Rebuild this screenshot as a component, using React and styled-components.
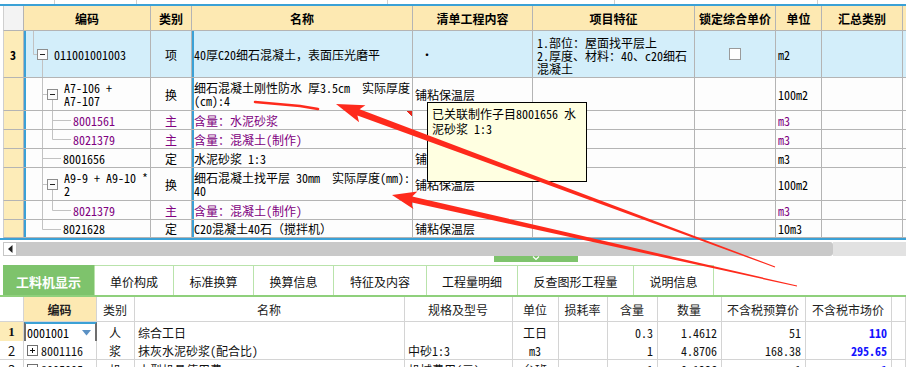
import React from 'react';
import styled, { createGlobalStyle } from 'styled-components';

const FONT = `"Noto Sans Mono CJK SC", "Noto Sans CJK SC", "Liberation Sans", sans-serif`;
const UI_FONT = `"Noto Sans CJK SC", "Liberation Sans", sans-serif`;

const GlobalStyle = createGlobalStyle`
  *, *::before, *::after { box-sizing: border-box; }
  html, body { margin: 0; padding: 0; background: #fff; }
  body { font-family: ${FONT}; }
`;

const BLUE = '#3ba1d6';
const GRID = '#b4b4b4';
const HEAD_BG = '#fde9b2';
const NUM_BG = '#fdecb8';
const SEL_BG = '#d3eefa';
const PURPLE = '#800080';

const Page = styled.div`
  position: relative;
  width: 906px;
  height: 367px;
  overflow: hidden;
  background: #fff;
  font-family: ${FONT};
  font-size: 12px;
  color: #000;
`;

/* ---------- top strip ---------- */
const TopStrip = styled.div`
  height: 4px;
  display: grid;
  grid-template-columns: 55px 82px 251px 227px 203px 1fr;
`;
const StripCell = styled.div`
  border-right: 1px solid #cfcfcf;
`;

/* ---------- top table ---------- */
const TopTable = styled.div`
  border-top: 2px solid ${BLUE};
  border-bottom: 2px solid ${BLUE};
`;
const topCols = '21px 127px 41px 221px 120px 162px 81px 46px 81px 1fr';
const TRow = styled.div`
  display: grid;
  grid-template-columns: ${topCols};
  padding-left: 3px;
  height: ${p => p.$h}px;
  line-height: 13px;
`;
const TCell = styled.div`
  position: relative;
  display: flex;
  align-items: center;
  justify-content: ${p => (p.$center ? 'center' : 'flex-start')};
  padding: 0 2px;
  border-right: 1px solid ${GRID};
  border-bottom: 1px solid ${GRID};
  background-color: ${p => p.$bg || '#fdfdfd'};
  color: ${p => (p.$purple ? PURPLE : '#000')};
  white-space: pre;
  overflow: hidden;
  ${p => (p.$blue ? `box-shadow: inset 2px 0 0 ${BLUE};` : '')}
  ${p =>
    p.$marked
      ? `background-image: linear-gradient(225deg, #e8261a 3.6px, transparent 3.6px);
         background-repeat: no-repeat; background-position: top right; background-size: 6px 6px;`
      : ''}
`;
const HeadCell = styled(TCell)`
  justify-content: center;
  font-weight: 700;
  background-color: ${HEAD_BG};
`;
const CornerCell = styled(TCell)`
  background-color: #f3f3f3;
  border-left: 1px solid #cfcfcf;
`;
const NumCell = styled(TCell)`
  background-color: ${NUM_BG};
  border-left: 1px solid #cfcfcf;
  font-weight: 700;
  padding-left: 6px;
`;
const CodeCell = styled(TCell)`
  padding: 0;
`;
const CodeText = styled.span`
  position: relative;
  padding-left: ${p => p.$indent}px;
`;
const FeatureText = styled.span`
  align-self: flex-start;
  padding-top: 5px;
  padding-left: 2px;
`;
const Check = styled.span`
  width: 12px;
  height: 12px;
  border: 1px solid #9a9a9a;
  background: #fff;
`;
const TreeSvg = styled.svg`
  position: absolute;
  left: 0;
  top: 0;
  pointer-events: none;
`;

function treeSpec(kind, h) {
  const L = [];
  let box = null;
  const cy = Math.floor(h / 2);
  switch (kind) {
    case 'root':
      L.push([9.5, 0, 9.5, 23.5], [9.5, 23.5, 13, 23.5], [18.5, 29, 18.5, h]);
      box = { x: 13, y: 18, t: 'minus' };
      break;
    case 'group':
      L.push([18.5, 0, 18.5, h], [18.5, cy + 0.5, 23, cy + 0.5], [28.5, cy + 6, 28.5, h]);
      box = { x: 23, y: cy - 5, t: 'minus' };
      break;
    case 'childMid':
      L.push([18.5, 0, 18.5, h], [28.5, 0, 28.5, h], [28.5, 9.5, 47, 9.5]);
      break;
    case 'childLast':
      L.push([18.5, 0, 18.5, h], [28.5, 0, 28.5, 9.5], [28.5, 9.5, 47, 9.5]);
      break;
    case 'leaf':
      L.push([18.5, 0, 18.5, h], [18.5, 9.5, 37, 9.5]);
      break;
    case 'leafLast':
      L.push([18.5, 0, 18.5, 9.5], [18.5, 9.5, 37, 9.5]);
      break;
    default:
  }
  return { L, box };
}

function Tree({ kind, h }) {
  const { L, box } = treeSpec(kind, h);
  return (
    <TreeSvg width="127" height={h}>
      {L.map((l, i) => (
        <line key={i} x1={l[0]} y1={l[1]} x2={l[2]} y2={l[3]} stroke="#c2c2c2" strokeWidth="1" />
      ))}
      {box && <ToggleBox x={box.x} y={box.y} t={box.t} />}
    </TreeSvg>
  );
}

function ToggleBox({ x, y, t }) {
  return (
    <g>
      <rect x={x + 0.5} y={y + 0.5} width="10" height="10" fill="#fbfbfb" stroke="#8e8e8e" />
      <line x1={x + 3} y1={y + 5.5} x2={x + 8} y2={y + 5.5} stroke="#222" />
      {t === 'plus' && <line x1={x + 5.5} y1={y + 3} x2={x + 5.5} y2={y + 8} stroke="#222" />}
    </g>
  );
}

const topRows = [
  { h: 47, sel: true, num: '3', tree: 'root', indent: 30, code: '011001001003', cat: '项', name: '40厚C20细石混凝土，表面压光磨平', content: ' ·', feature: '1.部位：屋面找平层上\n2.厚度、材料：40、c20细石\n混凝土', lock: true, unit: 'm2' },
  { h: 33, tree: 'group', indent: 40, code: 'A7-106 +\nA7-107', cat: '换', name: '细石混凝土刚性防水 厚3.5cm  实际厚度\n(cm):4', content: '铺粘保温层', unit: '100m2' },
  { h: 19, tree: 'childMid', indent: 49, code: '8001561', purple: true, cat: '主', name: '含量：水泥砂浆', marked: true, unit: 'm3' },
  { h: 19, tree: 'childLast', indent: 49, code: '8021379', purple: true, cat: '主', name: '含量：混凝土(制作)', unit: 'm3' },
  { h: 19, tree: 'leaf', indent: 39, code: '8001656', cat: '定', name: '水泥砂浆 1:3', content: '铺粘保温层', unit: 'm3' },
  { h: 33, tree: 'group', indent: 40, code: 'A9-9 + A9-10 *\n2', cat: '换', name: '细石混凝土找平层 30mm  实际厚度(mm):\n40', content: '铺粘保温层', unit: '100m2' },
  { h: 19, tree: 'childLast', indent: 49, code: '8021379', purple: true, cat: '主', name: '含量：混凝土(制作)', marked: true, unit: 'm3' },
  { h: 18, tree: 'leafLast', indent: 39, code: '8021628', cat: '定', name: 'C20混凝土40石（搅拌机）', content: '铺粘保温层', unit: '10m3' },
];

const topHeads = ['编码', '类别', '名称', '清单工程内容', '项目特征', '锁定综合单价', '单位', '汇总类别', ''];

/* ---------- scroll + tabs ---------- */
const ScrollRow = styled.div`
  height: 16px;
  padding: 2px 0 0 3px;
  display: flex;
  align-items: flex-start;
`;
const ScrollBtn = styled.div`
  width: 14px;
  height: 14px;
  border: 1px solid #c6c6c6;
  background: #fff;
  display: flex;
  align-items: center;
  justify-content: center;
`;
const Thumb = styled.div`
  width: 816px;
  height: 14px;
  background: #c9c9c9;
  border-radius: 0 3px 3px 0;
`;
const Track = styled.div`
  flex: 1;
  height: 14px;
  background: #e2e2e2;
`;
const HandleRow = styled.div`
  height: 9px;
  display: flex;
  align-items: flex-start;
`;
const Handle = styled.div`
  margin-left: 494px;
  width: 84px;
  height: 6px;
  background: #7ec36c;
  display: flex;
  justify-content: center;
`;
const TabBar = styled.div`
  display: flex;
  padding-left: 3px;
  border-bottom: 2px solid #8fd07c;
`;
const Tab = styled.div`
  width: ${p => p.$w}px;
  height: 30px;
  display: flex;
  align-items: center;
  justify-content: center;
  padding-top: 2px;
  border-top: 1px solid ${p => (p.$active ? '#7ec36c' : '#b9e3ab')};
  border-right: 1px solid #b9e3ab;
  font-family: ${UI_FONT};
  font-size: ${p => (p.$active ? 13 : 12)}px;
  font-weight: ${p => (p.$active ? 700 : 400)};
  background: ${p => (p.$active ? '#7ec36c' : '#fff')};
  color: ${p => (p.$active ? '#fff' : '#111')};
`;
const tabs = [
  ['工料机显示', 92],
  ['单价构成', 79],
  ['标准换算', 80],
  ['换算信息', 80],
  ['特征及内容', 93],
  ['工程量明细', 91],
  ['反查图形工程量', 116],
  ['说明信息', 80],
];

/* ---------- bottom table ---------- */
const botCols = '24px 73px 38px 270px 108px 46px 49px 50px 64px 84px 86px 1fr';
const BRow = styled.div`
  display: grid;
  grid-template-columns: ${botCols};
  height: ${p => p.$h}px;
`;
const BCell = styled.div`
  position: relative;
  display: flex;
  align-items: center;
  justify-content: ${p => (p.$align === 'right' ? 'flex-end' : p.$align === 'center' ? 'center' : 'flex-start')};
  padding: 0 4px 0 3px;
  border-right: 1px solid #d4d4d4;
  border-bottom: 1px solid #d4d4d4;
  background: ${p => p.$bg || '#fff'};
  color: ${p => p.$color || '#111'};
  font-weight: ${p => (p.$bold ? 700 : 400)};
  white-space: nowrap;
  overflow: hidden;
`;
const BHead = styled(BCell)`
  justify-content: center;
  font-family: ${UI_FONT};
  font-size: 12px;
  color: #222;
  font-weight: ${p => (p.$bold ? 700 : 400)};
`;
const BNum = styled(BCell)`
  justify-content: center;
  padding: 0;
  font-family: ${p => (p.$sel ? `"Liberation Serif", serif` : UI_FONT)};
  font-size: 13px;
  font-weight: ${p => (p.$sel ? 700 : 400)};
`;
const EditCell = styled.div`
  display: flex;
  align-items: center;
  justify-content: space-between;
  padding: 0 4px 0 1px;
  border: 2px solid #6e6e6e;
  border-top-color: ${BLUE};
  background: #fff;
`;
const PlusSvg = styled.svg`
  flex: none;
  margin-right: 3px;
`;
const Market = styled.span`
  color: #1414ff;
  font-weight: 700;
`;

const botHeads = ['', '编码', '类别', '名称', '规格及型号', '单位', '损耗率', '含量', '数量', '不含税预算价', '不含税市场价', ''];
const botRows = [
  { num: '1', sel: true, code: '0001001', edit: true, cat: '人', name: '综合工日', spec: '', unit: '工日', qty: '0.3', amount: '1.4612', budget: '51', market: '110' },
  { num: '2', code: '8001116', plus: true, cat: '浆', name: '抹灰水泥砂浆(配合比)', spec: '中砂1:3', unit: 'm3', qty: '1', amount: '4.8706', budget: '168.38', market: '295.65' },
  { num: '3', code: '8005005', plus: true, cat: '机', name: '小型机具使用费', spec: '机械费用(元)', unit: '台班', qty: '1', amount: '0.1236', budget: '1', market: '1' },
];

/* ---------- overlays ---------- */
const Tooltip = styled.div`
  position: absolute;
  left: 427px;
  top: 102px;
  width: 160px;
  height: 80px;
  padding: 3px 4px;
  border: 1px solid #000;
  background: #ffffe1;
  font-size: 12px;
  line-height: 15px;
  white-space: normal;
  word-break: break-all;
  z-index: 5;
`;
const Overlay = styled.svg`
  position: absolute;
  left: 0;
  top: 0;
  z-index: 10;
  pointer-events: none;
`;

function arrowPoints(tx, ty, px, py, w0, w1, L, H) {
  const dx = px - tx;
  const dy = py - ty;
  const len = Math.hypot(dx, dy);
  const ux = dx / len;
  const uy = dy / len;
  const nx = -uy;
  const ny = ux;
  const bx = px - ux * L;
  const by = py - uy * L;
  const cx = bx - ux * 4;
  const cy = by - uy * 4;
  const pts = [
    [tx + (nx * w0) / 2, ty + (ny * w0) / 2],
    [bx + (nx * w1) / 2, by + (ny * w1) / 2],
    [cx + nx * H, cy + ny * H],
    [px, py],
    [cx - nx * H, cy - ny * H],
    [bx - (nx * w1) / 2, by - (ny * w1) / 2],
    [tx - (nx * w0) / 2, ty - (ny * w0) / 2],
  ];
  return pts.map(p => `${p[0].toFixed(1)},${p[1].toFixed(1)}`).join(' ');
}

export default function App() {
  return (
    <Page>
      <GlobalStyle />
      <TopStrip>
        <StripCell />
        <StripCell />
        <StripCell />
        <StripCell />
        <StripCell />
        <div />
      </TopStrip>

      <TopTable>
        <TRow $h={25}>
          <CornerCell />
          {topHeads.map((t, i) => (
            <HeadCell key={i}>{t}</HeadCell>
          ))}
        </TRow>
        {topRows.map((r, i) => {
          const bg = r.sel ? SEL_BG : '#fdfdfd';
          return (
            <TRow key={i} $h={r.h}>
              <NumCell>{r.num || ''}</NumCell>
              <CodeCell $bg={bg} $blue $purple={r.purple}>
                <Tree kind={r.tree} h={r.h} />
                <CodeText $indent={r.indent}>{r.code}</CodeText>
              </CodeCell>
              <TCell $bg={bg} $center $purple={r.purple}>{r.cat}</TCell>
              <TCell $bg={bg} $blue $purple={r.purple} $marked={r.marked}>{r.name}</TCell>
              <TCell $bg={bg}>{r.content || ''}</TCell>
              <TCell $bg={bg}>{r.feature ? <FeatureText>{r.feature}</FeatureText> : null}</TCell>
              <TCell $bg={bg} $center>{r.lock ? <Check /> : null}</TCell>
              <TCell $bg={bg} $purple={r.purple}>{r.unit}</TCell>
              <TCell $bg={bg} />
              <TCell $bg={bg} />
            </TRow>
          );
        })}
      </TopTable>

      <ScrollRow>
        <ScrollBtn>
          <svg width="5" height="8" viewBox="0 0 5 8">
            <path d="M4.5 0 L0 4 L4.5 8 Z" fill="#222" />
          </svg>
        </ScrollBtn>
        <Thumb />
        <Track />
      </ScrollRow>
      <HandleRow>
        <Handle>
          <svg width="10" height="6" viewBox="0 0 10 6">
            <path d="M2 0.5 L5 3.5 L8 0.5" fill="none" stroke="#fff" strokeWidth="1.2" />
          </svg>
        </Handle>
      </HandleRow>

      <TabBar>
        {tabs.map(([t, w], i) => (
          <Tab key={t} $w={w} $active={i === 0}>
            {t}
          </Tab>
        ))}
      </TabBar>

      <BRow $h={25}>
        {botHeads.map((t, i) => (
          <BHead key={i} $bold={i === 1} $bg={i === 1 ? HEAD_BG : '#fff'}>
            {t}
          </BHead>
        ))}
      </BRow>
      {botRows.map((r, i) => (
        <BRow key={i} $h={19}>
          <BNum $sel={r.sel} $bg={r.sel ? NUM_BG : '#fff'}>{r.num}</BNum>
          {r.edit ? (
            <EditCell>
              <span>{r.code}</span>
              <svg width="9" height="6" viewBox="0 0 9 6">
                <path d="M0 0 L9 0 L4.5 5.5 Z" fill="#5b91c4" />
              </svg>
            </EditCell>
          ) : (
            <BCell>
              {r.plus && (
                <PlusSvg width="11" height="11" viewBox="0 0 11 11">
                  <rect x="0.5" y="0.5" width="10" height="10" fill="#fff" stroke="#6f6f6f" />
                  <line x1="3" y1="5.5" x2="8" y2="5.5" stroke="#111" />
                  <line x1="5.5" y1="3" x2="5.5" y2="8" stroke="#111" />
                </PlusSvg>
              )}
              {r.code}
            </BCell>
          )}
          <BCell $align="center">{r.cat}</BCell>
          <BCell>{r.name}</BCell>
          <BCell>{r.spec}</BCell>
          <BCell $align="center">{r.unit}</BCell>
          <BCell />
          <BCell $align="right">{r.qty}</BCell>
          <BCell $align="right">{r.amount}</BCell>
          <BCell $align="right">{r.budget}</BCell>
          <BCell $align="right">
            <Market>{r.market}</Market>
          </BCell>
          <BCell />
        </BRow>
      ))}

      <Tooltip>已关联制作子目8001656 水泥砂浆 1:3</Tooltip>

      <Overlay width="906" height="367" viewBox="0 0 906 367">
        <path d="M255 102 L300 106 L318 109" fill="none" stroke="#fe2a1c" strokeWidth="2.6" strokeLinecap="round" />
        <polygon points={arrowPoints(775, 267, 336, 104, 1, 6.5, 24, 9)} fill="#fe2a1c" />
        <polygon points={arrowPoints(797, 286, 392, 195, 1, 6, 20, 9)} fill="#fe2a1c" />
      </Overlay>
    </Page>
  );
}
